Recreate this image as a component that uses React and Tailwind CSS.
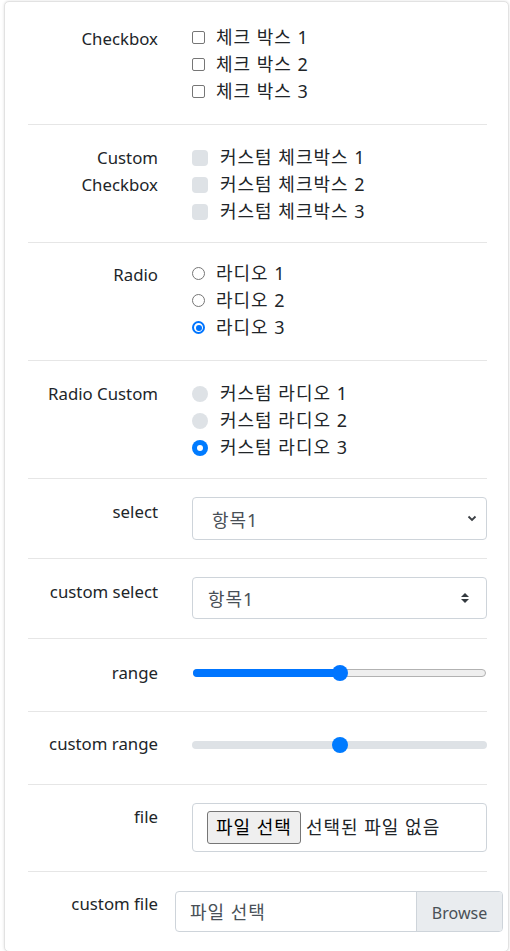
import React from 'react';

const FONT = "font-['Segoe_UI','Noto_Sans','Noto_Sans_CJK_KR',sans-serif]";
// Korean runs render wider in the reference than Noto CJK does at 16px
const KO = 'text-[18px] tracking-[1px]';

const Row = ({ label, labelPad, ctrlPad, last, children }) => {
  return (
    <div className={`flex ${last ? '' : 'border-b border-[#e6e6e6]'}`}>
      <div className={`w-[130px] shrink-0 text-right text-[16.8px] leading-[27px] ${labelPad}`}>{label}</div>
      <div className={`ml-[34px] flex-1 ${ctrlPad}`}>{children}</div>
    </div>
  );
};

const NativeCheck = ({ text }) => (
  <div className="flex items-center h-[27px]">
    <span className="w-[13px] h-[13px] rounded-[2px] border border-[#767676] bg-white" />
    <span className={`ml-[11px] ${KO}`}>{text}</span>
  </div>
);

const NativeRadio = ({ text, checked }) => (
  <div className="flex items-center h-[27px]">
    {checked ? (
      <span className="w-[13px] h-[13px] rounded-full border-[2px] border-[#0075ff] bg-white flex items-center justify-center">
        <span className="w-[6px] h-[6px] rounded-full bg-[#0075ff]" />
      </span>
    ) : (
      <span className="w-[13px] h-[13px] rounded-full border border-[#767676] bg-white" />
    )}
    <span className={`ml-[11px] ${KO}`}>{text}</span>
  </div>
);

const CustomCheck = ({ text }) => (
  <div className="flex items-center h-[27px]">
    <span className="w-[16px] h-[16px] rounded-[4px] bg-[#dee2e6]" />
    <span className={`ml-[12px] ${KO}`}>{text}</span>
  </div>
);

const CustomRadio = ({ text, checked }) => (
  <div className="flex items-center h-[27px]">
    {checked ? (
      <span className="w-[16px] h-[16px] rounded-full bg-[#007bff] flex items-center justify-center">
        <span className="w-[6px] h-[6px] rounded-full bg-white" />
      </span>
    ) : (
      <span className="w-[16px] h-[16px] rounded-full bg-[#dee2e6]" />
    )}
    <span className={`ml-[12px] ${KO}`}>{text}</span>
  </div>
);

export default function App() {
  return (
    <div className={`${FONT} text-[16px] text-[#212529] bg-white min-h-[951px] pt-[1px]`}>
      <div className="ml-[4px] w-[505px] rounded-[5px] border border-[#e2e2e2] shadow-[0_0_3px_rgba(0,0,0,0.12)] bg-white pl-[23px] pr-[21px]">
        <Row label="Checkbox" labelPad="pt-[23px]" ctrlPad="pt-[22px] pb-[19px]">
          <NativeCheck text="체크 박스 1" />
          <NativeCheck text="체크 박스 2" />
          <NativeCheck text="체크 박스 3" />
        </Row>
        <Row label={<>Custom<br />Checkbox</>} labelPad="pt-[19px]" ctrlPad="pt-[19px] pb-[17px]">
          <CustomCheck text="커스텀 체크박스 1" />
          <CustomCheck text="커스텀 체크박스 2" />
          <CustomCheck text="커스텀 체크박스 3" />
        </Row>
        <Row label="Radio" labelPad="pt-[18px]" ctrlPad="pt-[17px] pb-[19px]">
          <NativeRadio text="라디오 1" />
          <NativeRadio text="라디오 2" />
          <NativeRadio text="라디오 3" checked />
        </Row>
        <Row label="Radio Custom" labelPad="pt-[19px]" ctrlPad="pt-[19px] pb-[17px]">
          <CustomRadio text="커스텀 라디오 1" />
          <CustomRadio text="커스텀 라디오 2" />
          <CustomRadio text="커스텀 라디오 3" checked />
        </Row>
        <Row label="select" labelPad="pt-[19px]" ctrlPad="pt-[18px] pb-[18px]">
          <div className="h-[43px] rounded-[4px] border border-[#ced4da] flex items-center pl-[19px] pr-[8px] text-[#495057]">
            <span className={`flex-1 pt-[3px] ${KO}`}>항목1</span>
            <svg width="10" height="7" viewBox="0 0 10 7" className="mr-[1px]">
              <path d="M1.5 1.5 L5 5 L8.5 1.5" fill="none" stroke="#3b3f44" strokeWidth="1.8" />
            </svg>
          </div>
        </Row>
        <Row label="custom select" labelPad="pt-[19px]" ctrlPad="pt-[18px] pb-[19px]">
          <div className="h-[42px] rounded-[4px] border border-[#ced4da] flex items-center pl-[15px] pr-[17px] text-[#495057]">
            <span className={`flex-1 pt-[3px] ${KO}`}>항목1</span>
            <svg width="8" height="10" viewBox="0 0 4 5">
              <path fill="#343a40" d="M2 0L0 2h4zm0 5L0 3h4z" />
            </svg>
          </div>
        </Row>
        <Row label="range" labelPad="pt-[20px]" ctrlPad="pt-[26px] pb-[30px]">
          <div className="relative h-[16px] flex items-center">
            <div className="ml-[1px] mr-[1px] flex-1 h-[8px] rounded-full bg-[#efefef] border border-[#b2b2b2]" />
            <div className="absolute left-[1px] top-[4px] w-[148px] h-[8px] rounded-full bg-[#0075ff]" />
            <div className="absolute left-[140px] top-0 w-[16px] h-[16px] rounded-full bg-[#0075ff]" />
          </div>
        </Row>
        <Row label="custom range" labelPad="pt-[18px]" ctrlPad="pt-[25px] pb-[31px]">
          <div className="relative h-[16px] flex items-center">
            <div className="flex-1 h-[8px] rounded-full bg-[#dee2e6]" />
            <div className="absolute left-[140px] top-0 w-[16px] h-[16px] rounded-full bg-[#007bff]" />
          </div>
        </Row>
        <Row label="file" labelPad="pt-[18px]" ctrlPad="pt-[18px] pb-[19px]">
          <div className="h-[49px] rounded-[4px] border border-[#ced4da] flex items-center pl-[14px]">
            <span className={`h-[33px] px-[8px] flex items-center rounded-[3px] border border-[#767676] bg-[#efefef] text-black ${KO}`}>
              파일 선택
            </span>
            <span className={`ml-[5px] text-[#212529] ${KO}`}>선택된 파일 없음</span>
          </div>
        </Row>
        <Row label="custom file" labelPad="pt-[18px]" ctrlPad="pt-[19px] pb-[19px]" last>
          <div className="ml-[-17px] mr-[-16px] h-[41px] rounded-[4px] border border-[#ced4da] flex items-stretch text-[#495057] overflow-hidden">
            <span className={`flex-1 flex items-center pl-[14px] pt-[2px] ${KO}`}>파일 선택</span>
            <span className="w-[86px] flex items-center justify-center border-l border-[#ced4da] bg-[#e9ecef] pt-[2px]">
              Browse
            </span>
          </div>
        </Row>
      </div>
    </div>
  );
}
